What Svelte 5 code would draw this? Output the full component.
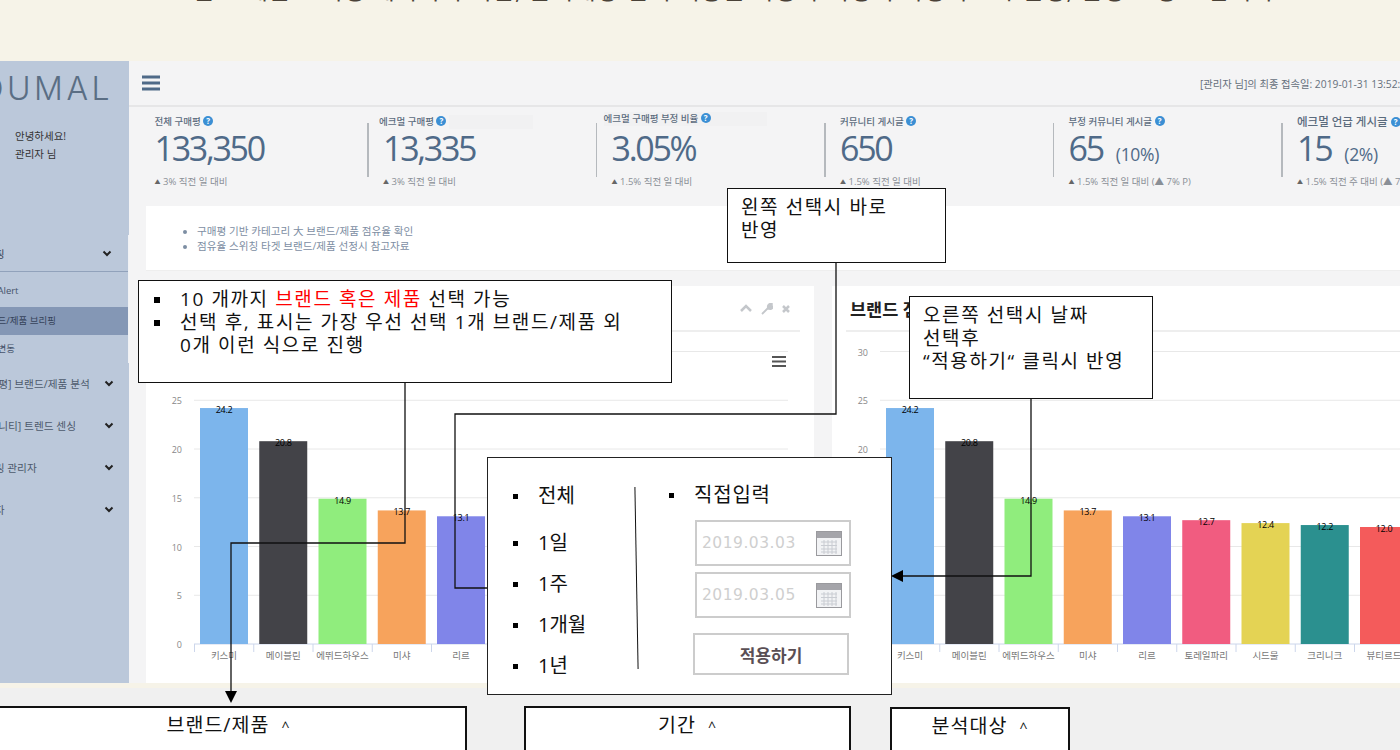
<script lang="ts">
	const stats = [
		{ label: '전체 구매평', value: '133,350', extra: '', sub: '3% 직전 일 대비' },
		{ label: '에크멀 구매평', value: '13,335', extra: '', sub: '3% 직전 일 대비', shift: 'mid', patch: true },
		{ label: '에크멀 구매평 부정 비율', value: '3.05%', extra: '', sub: '1.5% 직전 일 대비', shift: 'high' },
		{ label: '커뮤니티 게시글', value: '650', extra: '', sub: '1.5% 직전 일 대비' },
		{ label: '부정 커뮤니티 게시글', value: '65', extra: '(10%)', sub: '1.5% 직전 일 대비 (▲ 7% P)' },
		{ label: '에크멀 언급 게시글', value: '15', extra: '(2%)', sub: '1.5% 직전 주 대비 (▲ 7% P)', big: true }
	];

	const bars = [
		{ name: '키스미', value: 24.2, color: '#7cb5ec' },
		{ name: '메이블린', value: 20.8, color: '#434348' },
		{ name: '에뛰드하우스', value: 14.9, color: '#90ed7d' },
		{ name: '미샤', value: 13.7, color: '#f7a35c' },
		{ name: '리르', value: 13.1, color: '#8085e9' },
		{ name: '토레일파리', value: 12.7, color: '#f15c80' },
		{ name: '시드물', value: 12.4, color: '#e4d354' },
		{ name: '크리니크', value: 12.2, color: '#2b908f' },
		{ name: '뷰티르드', value: 12.0, color: '#f45b5b' }
	];

	const ticks = [0, 5, 10, 15, 20, 25, 30];
	const menu = ['[구매평] 브랜드/제품 분석', '[커뮤니티] 트렌드 센싱', '크롤링 관리자', '관리자'];
	const y = (v: number) => 312 - 9.75 * v;
</script>

{#snippet chevron()}
	<svg class="chev" width="10" height="7" viewBox="0 0 10 7">
		<polyline points="1.5,1.5 5,5 8.5,1.5" fill="none" stroke="#222" stroke-width="2" />
	</svg>
{/snippet}

{#snippet chart()}
	<svg class="chart" width="668" height="340" viewBox="0 0 668 340">
		{#each ticks as t}
			{#if t > 0}
				<line x1="48" x2="642" y1={y(t)} y2={y(t)} stroke="#e8e8e8" />
			{/if}
			<text class="ytick" x="36" y={y(t) + 4} text-anchor="end">{t}</text>
		{/each}
		<line x1="48" x2="642" y1="312" y2="312" stroke="#ccd6eb" />
		{#each bars as b, i}
			<line x1={48.5 + 59.25 * i} x2={48.5 + 59.25 * i} y1="312" y2="320" stroke="#ccd6eb" />
			<rect x={54 + 59.25 * i} y={y(b.value)} width="48" height={9.75 * b.value} fill={b.color} />
			<text class="dlabel" x={78 + 59.25 * i} y={y(b.value) + 5} text-anchor="middle">{b.value.toFixed(1)}</text>
			<text class="xtick" x={78 + 59.25 * i} y="327" text-anchor="middle">{b.name}</text>
		{/each}
		<path d="M626 25h14M626 29.500h14M626 34h14" stroke="#555" stroke-width="2" />
	</svg>
{/snippet}

{#snippet calendar()}
	<svg width="26" height="25" viewBox="0 0 26 25">
		<rect x="0.500" y="0.500" width="25" height="24" fill="#f2f3f5" stroke="#9a9a9e" />
		<rect x="1" y="1" width="24" height="6" fill="#a5a5aa" />
		<path d="M5 11h16M5 14.500h16M5 18h16M5 21h16M8 9v14M12 9v14M16 9v14M20 9v14" stroke="#c9ccd2" />
	</svg>
{/snippet}

<div class="page">
	<div class="banner">
		<p>브랜드/제품 브리핑 페이지의 기간, 분석대상 선택 기능을 사용자 지정이 가능하도록 변경, 반영 요청 드립니다</p>
	</div>

	<div class="dash">
		<aside class="sidebar">
			<div class="brand">
				<div class="logo">EOUMAL</div>
				<div class="hello">안녕하세요!</div>
				<div class="hello">관리자 님</div>
			</div>
			<nav class="nav">
				<div class="open">
					<div class="item head"><span>브리핑</span>{@render chevron()}</div>
					<div class="sub">부정Alert</div>
					<div class="sub active">브랜드/제품 브리핑</div>
					<div class="sub">순위변동</div>
				</div>
				{#each menu as m}
					<div class="item"><span>{m}</span>{@render chevron()}</div>
				{/each}
			</nav>
		</aside>

		<main class="main">
			<header class="topbar">
				<svg width="18" height="16" viewBox="0 0 18 16">
					<path d="M0 2h18M0 8h18M0 14h18" stroke="#4f6a88" stroke-width="3" />
				</svg>
				<span class="last">[관리자 님]의 최종 접속일: 2019-01-31 13:52:10</span>
			</header>

			<section class="stats">
				{#each stats as s, i}
					<div class="stat" class:first={i === 0}>
						<div class="label {s.shift ?? ''}" class:big={s.big}>
							{s.label}
							<span class="help">?</span>
							{#if s.patch}<span class="patch"></span>{/if}
						</div>
						<div class="value">{s.value}{#if s.extra}<small>{s.extra}</small>{/if}</div>
						<div class="delta"><span class="up">▲</span> {s.sub}</div>
					</div>
				{/each}
			</section>

			<section class="info">
				<ul>
					<li>구매평 기반 카테고리 大 브랜드/제품 점유율 확인</li>
					<li>점유율 스위칭 타겟 브랜드/제품 선정시 참고자료</li>
				</ul>
			</section>

			<section class="cards">
				<div class="card">
					<div class="card-head">
						<div class="tools">
							<svg width="14" height="9" viewBox="0 0 14 9"><polyline points="2,7 7,2 12,7" fill="none" stroke="#c4c7cb" stroke-width="2.500" /></svg>
							<svg width="12" height="12" viewBox="0 0 12 12"><path d="M1 11 7 5M7 5c-1-3 2-5 4-4L9 3l1 1 2-1c0 3-3 4-5 2" fill="#c4c7cb" stroke="#c4c7cb" stroke-width="1.800" /></svg>
							<svg width="10" height="10" viewBox="0 0 10 10"><path d="M2 2l6 6M8 2l-6 6" stroke="#c4c7cb" stroke-width="2.500" /></svg>
						</div>
					</div>
					{@render chart()}
				</div>
				<div class="card">
					<div class="card-head">
						<span class="card-title">브랜드 점유율</span>
					</div>
					{@render chart()}
				</div>
			</section>
		</main>
	</div>

	<div class="strip"></div>

	<footer class="tabs">
		<div class="tab brandtab">브랜드/제품 <i>^</i></div>
		<div class="tab period">기간 <i>^</i></div>
		<div class="tab target">분석대상 <i>^</i></div>
	</footer>

	<svg class="wires" width="1400" height="750" viewBox="0 0 1400 750">
		<g fill="none" stroke="#111" stroke-width="1.300">
			<polyline points="405,383 405,543 231,543 231,697" />
			<polyline points="836,263 836,414 455,414 455,588 487,588" />
			<polyline points="1031,399 1031,576 900,576" />
		</g>
		<polygon points="225,691 237,691 231,703" fill="#000" />
		<polygon points="891,576 903,570 903,582" fill="#000" />
	</svg>

	<div class="note note-left">
		<ul>
			<li>10 개까지 <b>브랜드 혹은 제품</b> 선택 가능</li>
			<li>선택 후, 표시는 가장 우선 선택 1개 브랜드/제품 외<br />0개 이런 식으로 진행</li>
		</ul>
	</div>

	<div class="note note-top">왼쪽 선택시 바로<br />반영</div>

	<div class="note note-right">오른쪽 선택시 날짜<br />선택후<br />“적용하기“ 클릭시 반영</div>

	<div class="popup">
		<ul class="ranges">
			<li>전체</li>
			<li>1일</li>
			<li>1주</li>
			<li>1개월</li>
			<li>1년</li>
		</ul>
		<div class="slash"></div>
		<div class="custom">
			<div class="custom-title">직접입력</div>
			<div class="date">2019.03.03 {@render calendar()}</div>
			<div class="date second">2019.03.05 {@render calendar()}</div>
			<button class="apply">적용하기</button>
		</div>
	</div>
</div>

<style>
	:global(body) {
		margin: 0;
		background: #f0f0f0;
	}

	.page {
		position: relative;
		width: 1400px;
		height: 750px;
		overflow: hidden;
		display: flex;
		flex-direction: column;
		font-family: "Open Sans", "Noto Sans CJK KR", sans-serif;
		color: #333;
	}

	.banner {
		height: 61px;
		flex: none;
		background: #f6f3e8;
		overflow: hidden;
	}

	.banner p {
		margin: -27px 0 0;
		height: 34px;
		line-height: 34px;
		text-align: center;
		font-size: 23.500px;
		letter-spacing: 0.900px;
		color: #4a4238;
		white-space: nowrap;
		padding-left: 44px;
	}

	.dash {
		display: flex;
		height: 622px;
		flex: none;
	}

	.sidebar {
		flex: none;
		width: 189px;
		margin-left: -60px;
		background: #bbc8da;
		box-sizing: border-box;
		display: flex;
		flex-direction: column;
	}

	.brand {
		height: 174px;
		flex: none;
	}

	.logo {
		font-family: Inter, sans-serif;
		font-weight: 300;
		font-size: 32px;
		letter-spacing: 3.500px;
		color: #5a6e84;
		line-height: 36px;
		margin: 10px 0 20px 0;
		text-align: right;
		padding-right: 16px;
	}

	.hello {
		font-size: 10.500px;
		line-height: 18px;
		color: #333;
		padding-left: 75px;
	}

	.open {
		border-right: 1px solid #f0f2f5;
		margin-bottom: -1px;
	}

	.item {
		display: flex;
		justify-content: space-between;
		align-items: center;
		height: 42px;
		padding: 0 15px 0 35px;
		font-size: 10.700px;
		color: #4d5a6c;
	}

	.item.head {
		height: 36px;
		border-bottom: 1px solid #91a2bb;
		padding-right: 16px;
		color: #3b4656;
	}

	.sub {
		height: 28px;
		line-height: 28px;
		font-size: 9.500px;
		padding-left: 40px;
		color: #45536a;
	}

	.head + .sub {
		margin: 5px 0 2px;
	}

	.sub.active {
		background: #8497b5;
		color: #36435a;
	}

	.chev {
		flex: none;
	}

	.main {
		flex: none;
		width: 1271px;
		background: #f4f4f5;
		display: flex;
		flex-direction: column;
		overflow: hidden;
	}

	.topbar {
		height: 44px;
		flex: none;
		display: flex;
		align-items: center;
		justify-content: space-between;
		padding-left: 13px;
		border-bottom: 2px solid #e6e6e7;
		white-space: nowrap;
	}

	.last {
		font-size: 10.300px;
		color: #66707c;
		margin-right: -12px;
	}

	.stats {
		height: 99px;
		flex: none;
		margin-left: 9.500px;
		display: grid;
		grid-template-columns: repeat(6, 228.500px);
		white-space: nowrap;
		padding-top: 8px;
		box-sizing: border-box;
	}

	.stat {
		position: relative;
		padding-left: 16px;
	}

	.stat:not(.first)::before {
		content: "";
		position: absolute;
		left: 0;
		top: 8px;
		height: 54px;
		width: 1.500px;
		background: #b5b9bd;
	}

	.label {
		position: relative;
		height: 14px;
		font-size: 9.500px;
		font-weight: 500;
		line-height: 14px;
		color: #5b6b7d;
	}

	.label.mid {
		margin-left: -4px;
	}

	.label.high {
		margin-left: -8px;
		top: -3px;
		width: 163px;
		background: #f1f1f2;
	}

	.label.big {
		font-size: 11.500px;
	}

	.help {
		display: inline-block;
		width: 10px;
		height: 10px;
		line-height: 10px;
		border-radius: 50%;
		background: #3b8fd4;
		color: #fff;
		font-size: 8px;
		font-weight: 700;
		text-align: center;
		vertical-align: 1px;
	}

	.patch {
		display: inline-block;
		width: 84px;
		height: 14px;
		background: #f1f1f2;
		vertical-align: top;
	}

	.value {
		height: 36px;
		font-size: 34px;
		line-height: 36px;
		letter-spacing: -2.300px;
		color: #4f6a88;
		margin: 1px 0 9px;
	}

	.value small {
		font-size: 17.500px;
		line-height: 1;
		letter-spacing: -0.300px;
		margin-left: 13px;
	}

	.delta {
		font-size: 9.500px;
		line-height: 14px;
		color: #8a8f96;
	}

	.up {
		font-size: 6px;
		vertical-align: 1px;
		color: #666;
	}

	.info {
		height: 65px;
		flex: none;
		margin-left: 17px;
		background: #fff;
		box-sizing: border-box;
		padding-top: 17px;
		border-bottom: 1px solid #eee;
	}

	.info ul {
		margin: 0;
		padding: 1px 0 0 51px;
		font-size: 10.600px;
		line-height: 15px;
		color: #7d8ea3;
	}

	.cards {
		display: flex;
		gap: 18px;
		margin: 15px 0 0 17px;
		height: 397px;
		flex: none;
	}

	.card {
		flex: none;
		width: 668px;
		background: #fff;
		overflow: hidden;
	}

	.card-head {
		height: 43px;
		margin: 0 14px;
		padding-left: 4px;
		border-bottom: 2px solid #eee;
		display: flex;
		align-items: center;
		padding-top: 1px;
	}

	.card-title {
		font-size: 17.500px;
		font-weight: 700;
		color: #222;
	}

	.tools {
		display: flex;
		align-items: center;
		gap: 8px;
		margin: 0 9px 0 auto;
	}

	.chart {
		display: block;
	}

	.ytick {
		font-size: 9px;
		fill: #888;
	}

	.dlabel {
		font-size: 9px;
		letter-spacing: -0.300px;
		fill: #000;
	}

	.xtick {
		font-size: 9.500px;
		fill: #777;
	}

	.strip {
		height: 5px;
		flex: none;
		background: #f6f3e8;
	}

	.tabs {
		flex: 1;
		background: #f0f0f0;
		display: flex;
		align-items: flex-start;
		padding-top: 18px;
	}

	.tab {
		flex: none;
		height: 70px;
		box-sizing: border-box;
		background: #fff;
		border: 2px solid #111;
		text-align: center;
		font-size: 19.500px;
		line-height: 34px;
		color: #111;
		letter-spacing: 1px;
	}

	.tab i {
		font-style: normal;
		font-size: 14px;
		margin-left: 6px;
	}

	.brandtab {
		width: 477px;
		margin-left: -10px;
	}

	.period {
		width: 327px;
		margin-left: 57px;
		margin-top: 0;
	}

	.target {
		width: 180px;
		margin-left: 39px;
		margin-top: 1px;
	}

	.wires {
		position: absolute;
		left: 0;
		top: 0;
		pointer-events: none;
	}

	.note {
		position: absolute;
		box-sizing: border-box;
		background: #fff;
		border: 1.500px solid #111;
		font-size: 19px;
		line-height: 23px;
		letter-spacing: 1.600px;
		color: #111;
		white-space: nowrap;
	}

	.note ul {
		list-style: none;
		margin: 0;
		padding: 0;
	}

	.note li {
		position: relative;
		padding-left: 41px;
	}

	.note li::before {
		content: "";
		position: absolute;
		left: 15px;
		top: 9px;
		width: 6px;
		height: 6px;
		background: #000;
	}

	.note b {
		font-weight: 400;
		color: #f00;
	}

	.note-left {
		left: 138px;
		top: 280px;
		width: 534px;
		height: 103px;
		padding-top: 7px;
	}

	.note-top {
		left: 727px;
		top: 188px;
		width: 219px;
		height: 75px;
		padding: 7px 0 0 13px;
	}

	.note-right {
		left: 909px;
		top: 296px;
		width: 244px;
		height: 103px;
		padding: 7px 0 0 13px;
	}

	.popup {
		position: absolute;
		left: 487px;
		top: 457px;
		width: 405px;
		height: 238px;
		box-sizing: border-box;
		background: #fff;
		border: 1.500px solid #222;
		display: flex;
		color: #111;
		font-size: 20px;
	}

	.ranges {
		list-style: none;
		margin: 24px 0 0;
		padding: 0 0 0 25px;
		width: 123px;
		flex: none;
		display: flex;
		flex-direction: column;
		gap: 13px;
	}

	.ranges li,
	.custom-title {
		position: relative;
		padding-left: 25px;
		line-height: 28px;
	}

	.ranges li:nth-child(2) {
		margin-top: 6px;
	}

	.ranges li::before,
	.custom-title::before {
		content: "";
		position: absolute;
		left: 0;
		top: 12px;
		width: 5px;
		height: 5px;
		background: #000;
	}

	.slash {
		flex: none;
		width: 1px;
		height: 182px;
		margin-top: 29px;
		background: #111;
		transform: rotate(-1deg);
	}

	.custom {
		margin-left: 32px;
		padding-top: 23px;
		display: flex;
		flex-direction: column;
		align-items: flex-start;
	}

	.custom-title {
		letter-spacing: 0.800px;
		margin-bottom: 11px;
	}

	.date {
		width: 156px;
		height: 46px;
		margin-left: 26px;
		box-sizing: border-box;
		border: 2px solid #ccc;
		display: flex;
		align-items: center;
		justify-content: space-between;
		padding: 0 7px 0 5px;
		font-family: "DejaVu Sans", sans-serif;
		font-size: 15.500px;
		letter-spacing: 0.500px;
		color: #cfcfcf;
	}

	.date.second {
		margin-top: 6px;
	}

	.apply {
		width: 156px;
		height: 42px;
		margin: 15px 0 0 24px;
		box-sizing: border-box;
		border: 2px solid #ccc;
		background: #fff;
		font-family: "Noto Sans CJK KR", sans-serif;
		font-weight: 700;
		font-size: 17px;
		color: #5a4f55;
		padding: 0;
	}
</style>
